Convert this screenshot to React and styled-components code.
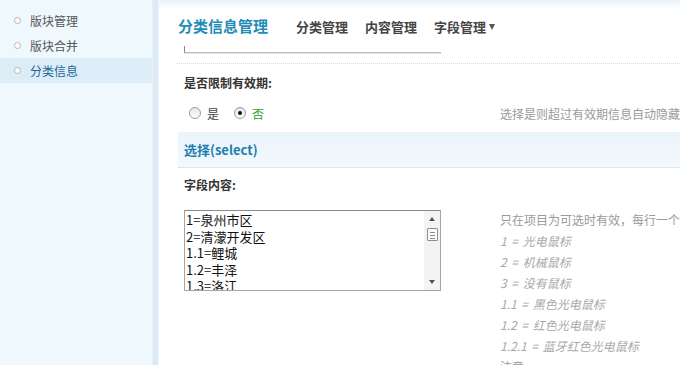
import React from 'react';
import styled, { createGlobalStyle } from 'styled-components';

const GlobalStyle = createGlobalStyle`
    html, body {
        margin: 0;
        padding: 0;
        background: #fff;
        overflow: hidden;
    }
    body {
        font-family: "Noto Sans CJK SC", "Liberation Sans", sans-serif;
        font-size: 12px;
        color: #333;
    }
`
const Page = styled.div`
    display: flex;
    height: 365px;
    width: 680px;
    overflow: hidden;
`
const Sidebar = styled.ul`
    width: 152px;
    margin: 0;
    padding: 8px 0 0;
    list-style: none;
    background: #eff8fd;
    flex-shrink: 0;
`
const SideItem = styled.li`
    display: flex;
    align-items: center;
    height: 25px;
    padding-left: 14px;
    gap: 9px;
    font-size: 12px;
    color: ${p => p.$active ? '#24689a' : '#555'};
    background: ${p => p.$active ? '#dcedf8' : 'transparent'};
`
const Bullet = styled.span`
    width: 5px;
    height: 5px;
    border: 1px solid #b5b5b5;
    border-radius: 50%;
    background: #fff;
`
const SideEdge = styled.div`
    width: 5px;
    flex-shrink: 0;
    background: #dbeaf6;
    border-right: 1px solid #eef5fb;
    border-left: 1px solid #e4eff8;
`
const Main = styled.div`
    flex: 1;
    display: flex;
    flex-direction: column;
    min-width: 0;
    overflow: hidden;
`
const Header = styled.div`
    display: flex;
    flex-shrink: 0;
    align-items: center;
    height: 44px;
    padding: 8px 0 0 19px;
    box-sizing: border-box;
    background: linear-gradient(#e9f3fa 0px, #ffffff 10px);
`
const Title = styled.h1`
    margin: 0 28px 0 0;
    font-size: 15px;
    font-weight: bold;
    color: #1f8db6;
    line-height: 18px;
`
const NavItem = styled.span`
    font-size: 13px;
    font-weight: bold;
    color: #444;
    margin-right: 17px;
    display: flex;
    align-items: center;
    gap: 3px;
`
const Caret = styled.span`
    width: 0;
    height: 0;
    border-left: 3.5px solid transparent;
    border-right: 3.5px solid transparent;
    border-top: 6px solid #555;
    margin-top: 1px;
`
const Content = styled.div`
    flex-shrink: 0;
    padding-left: 18px;
`
const InputStub = styled.div`
    margin: 2px 0 0 7px;
    width: 256px;
    height: 6px;
    border-left: 1px solid #888;
    border-bottom: 1px solid #bdbdbd;
    box-shadow: 0 1px 0 #e3e3e3;
`
const Dotted = styled.div`
    margin-top: 10px;
    border-top: 1px dotted #c9dce9;
`
const FieldLabel = styled.div`
    display: flex;
    align-items: center;
    height: ${p => p.$h}px;
    padding-left: 7px;
    font-weight: bold;
    font-size: 12px;
    color: #333;
`
const RadioRow = styled.div`
    display: grid;
    grid-template-columns: 316px 1fr;
    align-items: center;
    height: 26px;
    padding: 0 0 6px 7px;
`
const Choices = styled.div`
    display: flex;
    align-items: center;
    padding-left: 5px;
`
const Radio = styled.span`
    position: relative;
    width: 10px;
    height: 10px;
    border: 1px solid #9a9a9a;
    border-radius: 50%;
    background: linear-gradient(#e6e6e6, #ffffff);
    margin-right: 6px;
    &::after {
        content: '';
        display: ${p => p.$checked ? 'block' : 'none'};
        position: absolute;
        left: 3px;
        top: 3px;
        width: 4px;
        height: 4px;
        border-radius: 50%;
        background: #111;
    }
`
const ChoiceText = styled.span`
    color: ${p => p.$green ? '#2aa52a' : '#444'};
    margin-right: 15px;
`
const Hint = styled.div`
    color: #9a9a9a;
    white-space: nowrap;
`
const Band = styled.div`
    display: flex;
    align-items: center;
    height: 35px;
    margin-left: 1px;
    padding-left: 6px;
    background: linear-gradient(#eaf4fb, #f3f9fd);
    border-bottom: 1px dotted #c9dce9;
    font-size: 13px;
    font-weight: bold;
    color: #1f7eae;
`
const FieldGrid = styled.div`
    display: grid;
    grid-template-columns: 316px 1fr;
    padding: 7px 0 0 7px;
`
const ListBox = styled.div`
    display: flex;
    width: 257px;
    height: 81px;
    box-sizing: border-box;
    border: 1px solid #a5a5a5;
    border-top-color: #8a8a8a;
    margin-top: 2px;
    overflow: hidden;
`
const ListText = styled.div`
    flex: 1;
    padding: 1px 0 0 1px;
    font-size: 13px;
    line-height: 16.5px;
    color: #111;
    white-space: nowrap;
    overflow: hidden;
`
const ScrollBar = styled.div`
    width: 16px;
    flex-shrink: 0;
    background: #f3f3f3;
    display: flex;
    flex-direction: column;
    align-items: center;
`
const Arrow = styled.span`
    width: 0;
    height: 0;
    margin-top: ${p => p.$up ? '6px' : 'auto'};
    margin-bottom: ${p => p.$up ? '0' : '6px'};
    border-left: 3px solid transparent;
    border-right: 3px solid transparent;
    ${p => p.$up ? 'border-bottom: 4px solid #555;' : 'border-top: 4px solid #555;'}
`
const Thumb = styled.span`
    margin-top: 7px;
    width: 9px;
    height: 11px;
    border: 1px solid #8f8f8f;
    background: repeating-linear-gradient(#fafafa 0 2px, #8a8a8a 2px 3px);
    background-size: 5px 11px;
    background-position: center 1px;
    background-repeat: no-repeat;
    background-color: #fafafa;
    border-radius: 1px;
`
const HintList = styled.div`
    color: #9a9a9a;
    line-height: 21px;
    white-space: nowrap;
    margin-top: 1px;
`
const Example = styled.div`
    font-style: italic;
    color: #a8a8a8;
    word-spacing: 2px;
`

const options = ['1=泉州市区', '2=清濛开发区', '1.1=鲤城', '1.2=丰泽', '1.3=洛江', '1.4=泉港'];
const examples = ['1 = 光电鼠标', '2 = 机械鼠标', '3 = 没有鼠标', '1.1 = 黑色光电鼠标', '1.2 = 红色光电鼠标', '1.2.1 = 蓝牙红色光电鼠标'];

export default function App() {
    return (
        <Page>
            <GlobalStyle />
            <Sidebar>
                <SideItem><Bullet />版块管理</SideItem>
                <SideItem><Bullet />版块合并</SideItem>
                <SideItem $active><Bullet />分类信息</SideItem>
            </Sidebar>
            <SideEdge />
            <Main>
                <Header>
                    <Title>分类信息管理</Title>
                    <NavItem>分类管理</NavItem>
                    <NavItem>内容管理</NavItem>
                    <NavItem>字段管理<Caret /></NavItem>
                </Header>
                <Content>
                    <InputStub />
                    <Dotted />
                    <FieldLabel $h={36}>是否限制有效期:</FieldLabel>
                    <RadioRow>
                        <Choices>
                            <Radio /><ChoiceText>是</ChoiceText>
                            <Radio $checked /><ChoiceText $green>否</ChoiceText>
                        </Choices>
                        <Hint>选择是则超过有效期信息自动隐藏</Hint>
                    </RadioRow>
                    <Band>选择(select)</Band>
                    <FieldLabel $h={33}>字段内容:</FieldLabel>
                    <FieldGrid>
                        <ListBox>
                            <ListText>
                                {options.map(o => <div key={o}>{o}</div>)}
                            </ListText>
                            <ScrollBar>
                                <Arrow $up />
                                <Thumb />
                                <Arrow />
                            </ScrollBar>
                        </ListBox>
                        <HintList>
                            <div>只在项目为可选时有效，每行一个可选项</div>
                            {examples.map(e => <Example key={e}>{e}</Example>)}
                            <div>注意:</div>
                        </HintList>
                    </FieldGrid>
                </Content>
            </Main>
        </Page>
    );
}
